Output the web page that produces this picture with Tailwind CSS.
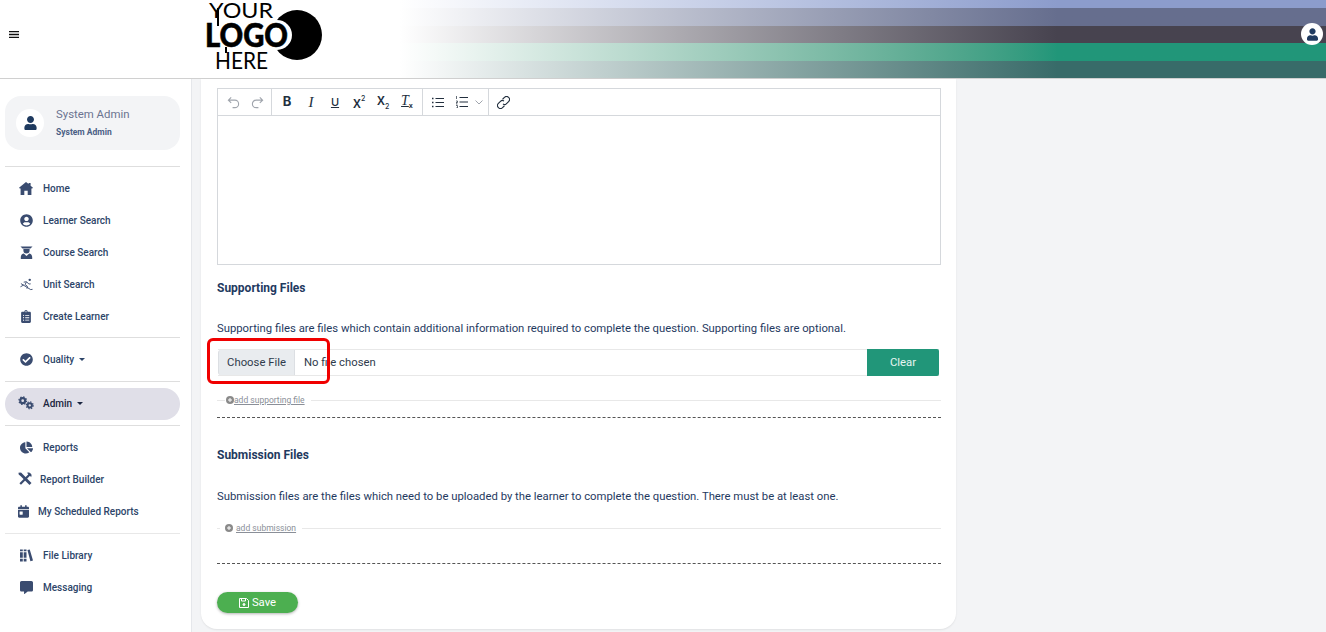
<!DOCTYPE html>
<html lang="en">
<head>
<meta charset="utf-8">
<title>Supporting Files</title>
<script src="https://cdn.jsdelivr.net/npm/@tailwindcss/browser@4"></script>
</head>
<body class="h-[632px] w-[1326px] overflow-hidden bg-[#f3f4f6] font-['Roboto',sans-serif] text-[#1f3a5f]">
<header class="flex h-[79px] border-b border-[#d0d0d0] bg-white">
  <div class="flex w-[400px] shrink-0 items-start">
    <svg class="ml-[9px] mt-[31px] h-[7px] w-[10px]" viewBox="0 0 10 7"><path d="M0 .5h10M0 3.500h10M0 6.500h10" stroke="#111" stroke-width="1.300"/></svg>
    <svg class="ml-[186px] h-[78px] w-[120px]" viewBox="0 0 120 78">
      <circle cx="92" cy="35" r="25" fill="#000"/>
      <circle cx="72" cy="35" r="15" fill="#fff"/>
      <path d="M13 8v18M21 47v6" stroke="#000" stroke-width="2"/>
      <text x="4" y="18" font-family="Lato, sans-serif" font-size="22" fill="#000" textLength="64" lengthAdjust="spacingAndGlyphs">YOUR</text>
      <text x="0" y="47" font-family="Lato, sans-serif" font-weight="900" font-size="33" fill="#000" stroke="#000" stroke-width=".6" textLength="83" lengthAdjust="spacingAndGlyphs">LOGO</text>
      <text x="10" y="69" font-family="Lato, sans-serif" font-size="23" fill="#000" textLength="53" lengthAdjust="spacingAndGlyphs">HERE</text>
    </svg>
  </div>
  <div class="relative flex-1">
    <div class="h-[8px] bg-linear-to-r from-white to-[#8c9ccc] to-71%"></div>
    <div class="h-[18px] bg-linear-to-r from-white to-[#666e8e] to-71%"></div>
    <div class="h-[17px] bg-linear-to-r from-white to-[#47434f] to-71%"></div>
    <div class="h-[18px] bg-linear-to-r from-white to-[#219679] to-71%"></div>
    <div class="h-[17px] bg-linear-to-r from-white to-[#386b69] to-71%"></div>
    <div class="absolute right-[3px] top-[23px] flex h-[22px] w-[22px] items-center justify-center rounded-full bg-white">
      <svg class="h-[13px] w-[11px]" viewBox="0 0 448 512" fill="#1f3a5f"><path d="M224 256c70.700 0 128-57.300 128-128S294.700 0 224 0 96 57.300 96 128s57.300 128 128 128zm89.600 32h-16.700c-22.200 10.200-46.900 16-72.900 16s-50.600-5.800-72.900-16h-16.700C60.200 288 0 348.200 0 422.400V464c0 26.500 21.500 48 48 48h352c26.500 0 48-21.500 48-48v-41.600c0-74.200-60.200-134.400-134.400-134.400z"/></svg>
    </div>
  </div>
</header>

<div class="flex h-[553px]">
  <aside class="h-full w-[192px] shrink-0 border-r border-[#e5e7eb] bg-white px-[5px] pt-[17px] text-[10px] font-medium text-[#2d4569]">
    <div class="flex h-[54px] w-[175px] items-center rounded-[16px] bg-[#f3f4f6] pl-[11px]">
      <div class="flex h-[28px] w-[28px] items-center justify-center rounded-full bg-white">
        <svg class="h-[14px] w-[13px]" viewBox="0 0 448 512" fill="#1f3a5f"><path d="M224 256c70.700 0 128-57.300 128-128S294.700 0 224 0 96 57.300 96 128s57.300 128 128 128zm89.600 32h-16.700c-22.200 10.200-46.900 16-72.900 16s-50.600-5.800-72.900-16h-16.700C60.200 288 0 348.200 0 422.400V464c0 26.500 21.500 48 48 48h352c26.500 0 48-21.500 48-48v-41.600c0-74.200-60.200-134.400-134.400-134.400z"/></svg>
      </div>
      <div class="ml-[12px] mb-[2px]">
        <div class="text-[11.400px] font-normal leading-[14px] text-[#6b7390]">System Admin</div>
        <div class="mt-[6px] text-[8.500px] font-bold leading-[10px] text-[#4a5f85]">System Admin</div>
      </div>
    </div>
    <div class="mt-[16px] h-px w-[175px] bg-[#dedede]"></div>

    <nav class="pt-[6px]">
      <a class="flex h-[32px] items-center pl-[14px]"><svg class="mb-[2px] h-[13px] w-[14px]" viewBox="0 0 14 13" fill="#3a4c70"><path d="M7 0l2.600 2.100V1h2v2.700L14 5.700l-.8.900H12.400V13H8.700V8.800H5.300V13H1.600V6.600H.8L0 5.700z"/></svg><span class="mb-[2px] ml-[10px]">Home</span></a>
      <a class="flex h-[32px] items-center pl-[15px]"><svg class="mb-[2px] h-[13px] w-[13px]" viewBox="0 0 496 512" fill="#3a4c70"><path d="M248 8C111 8 0 119 0 256s111 248 248 248 248-111 248-248S385 8 248 8zm0 96c48.600 0 88 39.400 88 88s-39.400 88-88 88-88-39.400-88-88 39.400-88 88-88zm0 344c-58.700 0-111.300-26.600-146.500-68.200 18.800-35.400 55.600-59.800 98.500-59.800 2.400 0 4.800.4 7.100 1.100 13 4.200 26.600 6.900 40.900 6.900 14.300 0 28-2.700 40.900-6.900 2.300-.7 4.700-1.100 7.100-1.100 42.900 0 79.700 24.400 98.500 59.800C359.300 421.400 306.700 448 248 448z"/></svg><span class="mb-[2px] ml-[10px]">Learner Search</span></a>
      <a class="flex h-[32px] items-center pl-[15px]"><svg class="mb-[2px] h-[13px] w-[13px]" viewBox="0 0 12 13" fill="#3a4c70"><path d="M0 .5h12L10 2.400H2zM2.900 3h6.200v1.500a3.100 3 0 0 1-6.200 0zM.3 13v-1.800c0-2 1.300-3.400 3-3.600L6 10l2.700-2.400c1.700.2 3 1.600 3 3.600V13z"/></svg><span class="mb-[2px] ml-[10px]">Course Search</span></a>
      <a class="flex h-[32px] items-center pl-[15px]"><svg class="mb-[2px] h-[13px] w-[13px]" viewBox="0 0 14 13" fill="none" stroke="#3a4c70"><circle cx="10.500" cy="1.500" r="1.300" fill="#3a4c70" stroke="none"/><path d="M4 4l3-.5 2.500 2.500 2-.2M7 3.700L5.500 6.500 8 8.500 7.500 11M1 5.500l10.500 6.500 2-.3M.5 9l3.500-2" stroke-width="1"/></svg><span class="mb-[2px] ml-[10px]">Unit Search</span></a>
      <a class="flex h-[32px] items-center pl-[16px]"><svg class="mb-[2px] h-[13px] w-[10px]" viewBox="0 0 384 512" fill="#3a4c70"><path d="M336 64h-80c0-35.300-28.700-64-64-64s-64 28.700-64 64H48C21.500 64 0 85.500 0 112v352c0 26.500 21.500 48 48 48h288c26.500 0 48-21.500 48-48V112c0-26.500-21.500-48-48-48zM96 424c-13.300 0-24-10.700-24-24s10.700-24 24-24 24 10.700 24 24-10.700 24-24 24zm0-96c-13.300 0-24-10.700-24-24s10.700-24 24-24 24 10.700 24 24-10.700 24-24 24zm0-96c-13.300 0-24-10.700-24-24s10.700-24 24-24 24 10.700 24 24-10.700 24-24 24zm96-192c13.300 0 24 10.700 24 24s-10.700 24-24 24-24-10.700-24-24 10.700-24 24-24zm128 368c0 4.400-3.600 8-8 8H168c-4.400 0-8-3.600-8-8v-16c0-4.400 3.600-8 8-8h144c4.400 0 8 3.600 8 8v16zm0-96c0 4.400-3.600 8-8 8H168c-4.400 0-8-3.600-8-8v-16c0-4.400 3.600-8 8-8h144c4.400 0 8 3.600 8 8v16zm0-96c0 4.400-3.600 8-8 8H168c-4.400 0-8-3.600-8-8v-16c0-4.400 3.600-8 8-8h144c4.400 0 8 3.600 8 8v16z"/></svg><span class="mb-[2px] ml-[12px]">Create Learner</span></a>
    </nav>
    <div class="mt-[4px] h-px w-[175px] bg-[#dedede]"></div>

    <a class="mt-[6px] flex h-[32px] items-center pl-[15px]"><svg class="mb-[2px] h-[13px] w-[13px]" viewBox="0 0 512 512" fill="#3a4c70"><path d="M504 256c0 136.967-111.033 248-248 248S8 392.967 8 256 119.033 8 256 8s248 111.033 248 248zM227.314 387.314l184-184c6.248-6.248 6.248-16.379 0-22.627l-22.627-22.627c-6.248-6.249-16.379-6.249-22.628 0L216 308.118l-70.059-70.059c-6.248-6.248-16.379-6.248-22.628 0l-22.627 22.627c-6.248 6.248-6.248 16.379 0 22.627l104 104c6.249 6.249 16.379 6.249 22.628.001z"/></svg><span class="mb-[2px] ml-[10px]">Quality</span><span class="ml-[5px] mb-[2px] h-0 w-0 border-x-[3px] border-t-[3px] border-x-transparent border-t-[#2d4569]"></span></a>
    <div class="mt-[5px] h-px w-[175px] bg-[#dedede]"></div>

    <a class="mt-[6px] flex h-[32px] w-[175px] items-center rounded-[16px] bg-[#e0dfe8] pl-[13px] text-[#1a2540]"><svg class="mb-[2px] h-[14px] w-[16px]" viewBox="0 0 17 14" fill="none" stroke="#3a4c70"><circle cx="5" cy="4.500" r="2.600" stroke-width="2.300"/><circle cx="5" cy="4.500" r="4" stroke-width="1.400" stroke-dasharray="1.500 1.640"/><circle cx="12.500" cy="9.500" r="2.300" stroke-width="2.100"/><circle cx="12.500" cy="9.500" r="3.700" stroke-width="1.300" stroke-dasharray="1.400 1.500"/></svg><span class="mb-[2px] ml-[9px]">Admin</span><span class="ml-[5px] mb-[2px] h-0 w-0 border-x-[3px] border-t-[3px] border-x-transparent border-t-[#1a2540]"></span></a>
    <div class="mt-[5px] h-px w-[175px] bg-[#dedede]"></div>

    <a class="mt-[6px] flex h-[32px] items-center pl-[15px]"><svg class="mb-[2px] h-[13px] w-[13px]" viewBox="0 0 544 512" fill="#3a4c70"><path d="M527.790 288H290.500l158.030 158.030c6.040 6.040 15.980 6.530 22.190.68 38.700-36.460 65.320-85.610 73.130-140.860 1.340-9.460-6.510-17.850-16.060-17.850zm-15.830-64.800C503.720 103.740 408.260 8.280 288.800.04 279.680-.59 272 7.100 272 16.240V240h223.770c9.140 0 16.820-7.680 16.190-16.800zM224 288V50.710c0-9.550-8.390-17.400-17.840-16.060C86.990 51.490-4.100 155.600.14 280.370 4.500 408.510 114.830 513.590 243.030 511.980c50.400-.63 96.970-16.870 135.260-44.030 7.900-5.600 8.420-17.230 1.570-24.080L224 288z"/></svg><span class="mb-[2px] ml-[10px]">Reports</span></a>
    <a class="flex h-[32px] items-center pl-[13px]"><svg class="mb-[2px] h-[14px] w-[14px]" viewBox="0 0 14 14" fill="none" stroke="#3a4c70"><path d="M2 1.500l10.500 10.500" stroke-width="2.800"/><path d="M12 2.200L2.200 12" stroke-width="2.200"/><path d="M9.500.8a3 3 0 0 1 3.700 3.700L11 3z" fill="#3a4c70" stroke-width=".5"/><path d="M.5.700l2-.2 1.200 1.500-1.500 1.500L.7 2.500z" fill="#3a4c70" stroke="none"/></svg><span class="mb-[2px] ml-[8px]">Report Builder</span></a>
    <a class="flex h-[32px] items-center pl-[13px]"><svg class="mb-[2px] h-[13px] w-[11px]" viewBox="0 0 448 512" fill="#3a4c70"><path d="M0 464c0 26.500 21.500 48 48 48h352c26.500 0 48-21.500 48-48V192H0v272zm64-192c0-8.800 7.200-16 16-16h96c8.800 0 16 7.200 16 16v96c0 8.800-7.200 16-16 16H80c-8.800 0-16-7.200-16-16v-96zM400 64h-48V16c0-8.800-7.200-16-16-16h-32c-8.800 0-16 7.200-16 16v48H160V16c0-8.800-7.200-16-16-16h-32c-8.800 0-16 7.200-16 16v48H48C21.500 64 0 85.500 0 112v48h448v-48c0-26.500-21.500-48-48-48z"/></svg><span class="mb-[2px] ml-[9px]">My Scheduled Reports</span></a>
    <div class="mt-[5px] h-px w-[175px] bg-[#e8e8e8]"></div>

    <a class="mt-[6px] flex h-[32px] items-center pl-[15px]"><svg class="mb-[2px] h-[13px] w-[13px]" viewBox="0 0 14 13" fill="#3a4c70"><path d="M0 0h3v2H0zM0 3h3v6H0zM0 10h3v3H0zM4 0h3v2H4zM4 3h3v6H4zM4 10h3v3H4zM8 .5L10.500 0 14 12l-2.800.8z"/></svg><span class="mb-[2px] ml-[10px]">File Library</span></a>
    <a class="flex h-[32px] items-center pl-[15px]"><svg class="mb-[2px] h-[13px] w-[13px]" viewBox="0 0 512 512" fill="#3a4c70"><path d="M448 0H64C28.700 0 0 28.700 0 64v288c0 35.300 28.700 64 64 64h96v84c0 9.800 11.200 15.500 19.100 9.700L304 416h144c35.300 0 64-28.700 64-64V64c0-35.300-28.700-64-64-64z"/></svg><span class="mb-[2px] ml-[10px]">Messaging</span></a>
  </aside>

  <main class="ml-[9px] h-[550px] w-[755px] rounded-b-[16px] bg-white px-[16px] pt-[9px] shadow-[0_1px_2px_rgba(0,0,0,0.08)]">
    <div class="h-[177px] w-[724px] border border-[#d5d8dc]">
      <div class="flex h-[27px] items-center border-b border-[#d5d8dc] text-[#222f3e]">
        <div class="flex h-full w-[54px] items-center border-r border-[#d5d8dc] pl-[3px]">
          <span class="flex w-[24px] justify-center"><svg class="h-[13px] w-[13px]" viewBox="0 0 14 14" fill="none" stroke="#a0a5ad" stroke-width="1.200"><path d="M4.500 1.500L1.500 4.500l3 3M1.500 4.500h7a4 4 0 0 1 0 8H6"/></svg></span>
          <span class="flex w-[24px] justify-center"><svg class="h-[13px] w-[13px]" viewBox="0 0 14 14" fill="none" stroke="#a0a5ad" stroke-width="1.200"><path d="M9.500 1.500l3 3-3 3M12.500 4.500h-7a4 4 0 0 0 0 8H8"/></svg></span>
        </div>
        <div class="flex h-full w-[151px] items-center border-r border-[#d5d8dc] pl-[3px]">
          <span class="flex w-[24px] justify-center font-['Inter',sans-serif] text-[13px] font-bold">B</span>
          <span class="flex w-[24px] justify-center font-['Liberation_Serif',serif] text-[15px] italic">I</span>
          <span class="flex w-[24px] justify-center font-['Inter',sans-serif] text-[11px] font-medium underline">U</span>
          <span class="flex h-[16px] w-[24px] justify-center font-['Inter',sans-serif] font-medium"><span class="mt-[1px] text-[15px] leading-[15px]">x</span><span class="text-[7px] leading-[9px]">2</span></span>
          <span class="flex h-[16px] w-[24px] justify-center font-['Inter',sans-serif] font-medium"><span class="mt-[-2px] text-[15px] leading-[15px]">x</span><span class="mt-[8px] text-[7px] leading-[9px]">2</span></span>
          <span class="flex h-[16px] w-[24px] justify-center font-['Liberation_Serif',serif]"><span class="text-[14px] font-medium italic leading-[14px] underline">T</span><span class="mt-[7px] font-['Inter',sans-serif] text-[7px] font-bold leading-[9px]">x</span></span>
        </div>
        <div class="flex h-full w-[66px] items-center border-r border-[#d5d8dc] pl-[3px]">
          <span class="flex w-[24px] justify-center"><svg class="h-[11px] w-[12px]" viewBox="0 0 12 11" fill="none" stroke="#222f3e"><path d="M3.500 1.500H12M3.500 5.500H12M3.500 9.500H12"/><path d="M0 1.500h1.500M0 5.500h1.500M0 9.500h1.500" stroke-width="1.500"/></svg></span>
          <span class="flex w-[24px] justify-center"><svg class="h-[12px] w-[12px]" viewBox="0 0 12 12" fill="none" stroke="#222f3e"><path d="M3.500 1.500H12M3.500 6H12M3.500 10.500H12"/><path d="M.5 0v3M0 5h1.500v1.500H0V8h1.500M0 9.500h1.500v2.500H0" stroke-width=".7"/></svg></span>
          <span class="flex w-[10px] justify-center"><svg class="h-[5px] w-[8px]" viewBox="0 0 8 5" fill="none" stroke="#a0a5ad"><path d="M.5.500L4 4 7.500.5"/></svg></span>
        </div>
        <div class="flex h-full items-center pl-[2px]">
          <span class="flex w-[24px] justify-center"><svg class="h-[13px] w-[13px]" viewBox="0 0 14 14" fill="none" stroke="#222f3e" stroke-width="1.200"><path d="M6 3.500l2-2a2.500 2.500 0 0 1 4.500 4.500l-2.500 2.500a2.500 2.500 0 0 1-3.500 0"/><path d="M8 10.500l-2 2A2.500 2.500 0 0 1 1.500 8L4 5.500a2.500 2.500 0 0 1 3.500 0"/></svg></span>
        </div>
      </div>
    </div>

    <h3 class="mt-[16px] text-[12px] font-bold leading-[14px]">Supporting Files</h3>
    <p class="mt-[27px] text-[11.300px] leading-[14px]">Supporting files are files which contain additional information required to complete the question. Supporting files are optional.</p>

    <div class="relative ml-px mt-[13px] flex h-[27px] w-[721px] border-y border-[#e8e8e8] text-[11.300px]">
      <div class="flex w-[77px] items-center justify-center rounded-l-[3px] border-x border-[#dcdfe3] bg-[#e9ecef] pt-px text-[#2f3b4c]">Choose File</div>
      <div class="flex flex-1 items-center pl-[9px] pt-px text-[#2f3b4c]">No file chosen</div>
      <div class="-my-px flex w-[72px] items-center justify-center rounded-r-[2px] bg-[#219679] pt-px text-white/90">Clear</div>
      <div class="absolute left-[-11px] top-[-12px] h-[46px] w-[123px] rounded-[6px] border-[3px] border-[#f00000]"></div>
    </div>

    <div class="mt-[17px] flex h-[14px] w-[724px] items-center text-[8.500px] text-[#8a8f98]">
      <span class="h-px w-[8px] bg-[#e8e8e8]"></span>
      <svg class="ml-[1px] h-[8px] w-[8px]" viewBox="0 0 8 8"><circle cx="4" cy="4" r="4" fill="#8a8a8a"/><path d="M4 2v4M2 4h4" stroke="#fff"/></svg>
      <span class="underline">add supporting file</span>
      <span class="ml-[6px] h-px flex-1 bg-[#e8e8e8]"></span>
    </div>
    <div class="mt-[10px] w-[724px] border-t border-dashed border-[#555]"></div>

    <h3 class="mt-[30px] text-[12px] font-bold leading-[14px]">Submission Files</h3>
    <p class="mt-[28px] text-[11.300px] leading-[14px]">Submission files are the files which need to be uploaded by the learner to complete the question. There must be at least one.</p>

    <div class="mt-[17px] flex h-[14px] w-[724px] items-center text-[8.500px] text-[#8a8f98]">
      <span class="h-px w-[3px] bg-[#e8e8e8]"></span>
      <svg class="ml-[5px] h-[8px] w-[8px]" viewBox="0 0 8 8"><circle cx="4" cy="4" r="4" fill="#8a8a8a"/><path d="M4 2v4M2 4h4" stroke="#fff"/></svg>
      <span class="ml-[3px] underline">add submission</span>
      <span class="ml-[6px] h-px flex-1 bg-[#e8e8e8]"></span>
    </div>
    <div class="mt-[28px] w-[724px] border-t border-dashed border-[#555]"></div>

    <button class="mt-[28px] flex h-[21px] w-[81px] items-center justify-center rounded-full bg-[#4caf50] pt-px text-[11.300px] text-white shadow-[0_1px_3px_rgba(0,0,0,0.3)]">
      <svg class="mr-[3px] h-[10px] w-[10px]" viewBox="0 0 10 10" fill="none" stroke="#fff"><path d="M.5.500h7l2 2v7h-9zM2.500.500v2.500h4V.500"/><circle cx="5" cy="6.500" r="1" fill="#fff"/></svg>Save
    </button>
  </main>
</div>
</body>
</html>
